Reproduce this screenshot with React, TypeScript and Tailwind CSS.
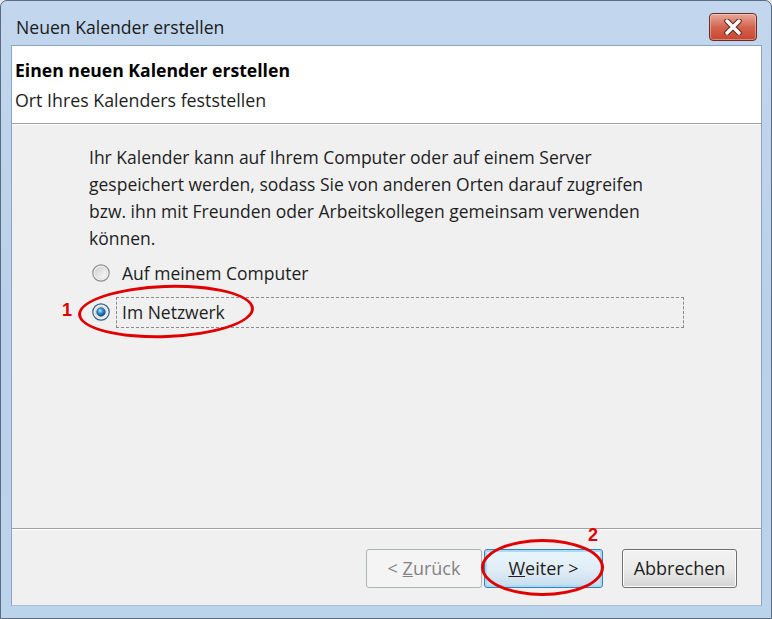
import React from 'react';

const font = { fontFamily: '"Open Sans", "Noto Sans", sans-serif' };

// Win7-style radio button
const Radio: React.FC<{ checked?: boolean }> = ({ checked }) => (
    <svg width="18" height="18" viewBox="0 0 18 18" className="shrink-0">
        <defs>
            <linearGradient id="rOff" x1="0" y1="0" x2="1" y2="1">
                <stop offset="0" stopColor="#cfcfcf" />
                <stop offset="1" stopColor="#ffffff" />
            </linearGradient>
            <radialGradient id="rOn" cx="0.4" cy="0.35" r="0.7">
                <stop offset="0" stopColor="#bfe8ff" />
                <stop offset="0.45" stopColor="#2a8fd6" />
                <stop offset="1" stopColor="#0b3f7a" />
            </radialGradient>
        </defs>
        <circle cx="9" cy="9" r="8.2" fill="#f4f4f4" stroke={checked ? '#2c628b' : '#8e8f8f'} strokeWidth="1.2" />
        <circle cx="9" cy="9" r="6" fill="url(#rOff)" stroke="#d6d6d6" strokeWidth="0.8" />
        {checked && <circle cx="9" cy="9" r="4.3" fill="url(#rOn)" stroke="#1c4f7e" strokeWidth="0.6" />}
    </svg>
);

const App: React.FC = () => {
    return (
        <div className="w-[772px] h-[619px] overflow-hidden bg-[#e6e6e6]" style={font}>
            <div className="relative w-full h-full flex flex-col rounded-t-[7px] border border-[#5b6b80] bg-gradient-to-b from-[#c2d7ee] via-[#b9d1ea] to-[#bcd3ec]">
                {/* title bar */}
                <div className="h-[44px] flex items-start justify-between pl-[15px] pr-[14px] shrink-0">
                    <span className="mt-[15px] text-[17.6px] leading-[22px] text-[#1b1b1b]">Neuen Kalender erstellen</span>
                    <button className="mt-[12px] w-[48px] h-[28px] rounded-[4px] border border-[#6b2a22] flex items-center justify-center bg-gradient-to-b from-[#e9a99b] via-[#d3634f] to-[#c8452d] shadow-[inset_0_0_0_1px_rgba(255,255,255,0.35)]">
                        <svg width="20" height="16" viewBox="0 0 20 16">
                            <path d="M4 2 L16 14 M16 2 L4 14" stroke="#5a2a24" strokeWidth="5.5" strokeLinecap="round" />
                            <path d="M4 2 L16 14 M16 2 L4 14" stroke="#ffffff" strokeWidth="3.4" strokeLinecap="round" />
                        </svg>
                    </button>
                </div>

                {/* client area */}
                <div className="flex-1 ml-[10px] mr-[9px] mb-[12px] flex flex-col bg-[#f0f0f0] border border-[#8ca4c0] border-b-[#a9bed6] text-[#1e1e1e]">
                    <div className="h-[77px] bg-white px-[3px] pt-[12px] shrink-0">
                        <div className="text-[17.6px] leading-[24px] font-bold text-black">Einen neuen Kalender erstellen</div>
                        <div className="mt-[6px] text-[17.8px] leading-[24px]">Ort Ihres Kalenders feststellen</div>
                    </div>
                    <div className="h-px bg-[#a0a0a0] shrink-0" />
                    <div className="h-px bg-white shrink-0" />

                    <div className="flex-1 pl-[77px] pr-[76px] pt-[19px]">
                        <p className="w-[575px] text-[17.5px] leading-[27px]">
                            Ihr Kalender kann auf Ihrem Computer oder auf einem Server gespeichert werden, sodass Sie von anderen Orten darauf zugreifen bzw. ihn mit Freunden oder Arbeitskollegen gemeinsam verwenden können.
                        </p>
                        <div className="mt-[6px] flex items-center h-[30px] pl-[3px]">
                            <Radio />
                            <span className="ml-[12px] text-[17.5px]">Auf meinem Computer</span>
                        </div>
                        <div className="mt-[9px] flex items-center h-[30px] pl-[3px]">
                            <Radio checked />
                            <div className="ml-[6px] w-[568px] h-[31px] flex items-center pl-[5px] border border-dashed border-[#8a8a8a]">
                                <span className="text-[17.5px]">Im Netzwerk</span>
                            </div>
                        </div>
                    </div>

                    <div className="h-px bg-[#a0a0a0] shrink-0" />
                    <div className="h-px bg-white shrink-0" />
                    <div className="h-[75px] shrink-0 flex items-start justify-end pr-[24px] pt-[19px]">
                        <button className="w-[116px] h-[39px] rounded-[3px] border border-[#adb2b5] bg-[#f4f4f4] text-[18px] text-[#838383]">
                            &lt; <span className="underline">Z</span>urück
                        </button>
                        <button className="ml-[2px] w-[119px] h-[39px] rounded-[3px] border border-[#3c7fb1] bg-gradient-to-b from-[#eaf6fd] via-[#e2eef7] to-[#c7dcec] shadow-[inset_0_0_0_2px_#a8dbf5] text-[18px] text-[#1e1e1e]">
                            <span className="underline">W</span>eiter &gt;
                        </button>
                        <button className="ml-[19px] w-[115px] h-[39px] rounded-[3px] border border-[#707070] bg-gradient-to-b from-[#f2f2f2] via-[#ebebeb] to-[#d4d4d4] shadow-[inset_0_0_0_1px_#fcfcfc] text-[18px] text-[#1e1e1e]">
                            Abbrechen
                        </button>
                    </div>
                </div>

                {/* annotations */}
                <span className="absolute left-[61px] top-[297px] text-[18px] leading-[24px] font-bold text-[#e00000]" style={{ fontFamily: '"Liberation Sans", Arial, sans-serif' }}>1</span>
                <span className="absolute left-[587px] top-[522px] text-[18px] leading-[24px] font-bold text-[#e00000]" style={{ fontFamily: '"Liberation Sans", Arial, sans-serif' }}>2</span>
                <div className="absolute left-[77px] top-[284px] w-[176px] h-[53px] rounded-[50%] border-[3px] border-[#e00000] -rotate-2" />
                <div className="absolute left-[480px] top-[538px] w-[123px] h-[57px] rounded-[50%] border-[3px] border-[#e00000]" />
            </div>
        </div>
    );
};

export default App;
